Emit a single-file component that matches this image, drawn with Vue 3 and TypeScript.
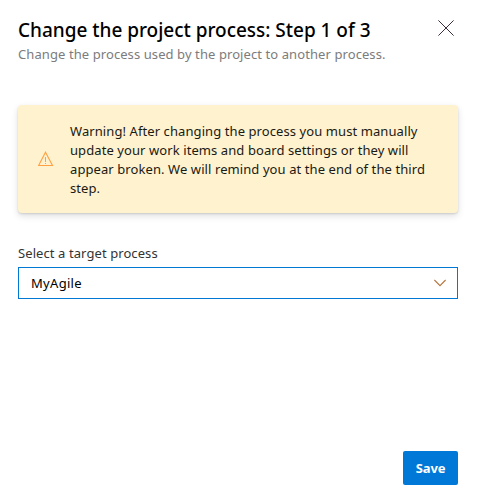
<script setup lang="ts">
import { ref } from 'vue'

const lines: string[] = [
  'Warning! After changing the process you must manually',
  'update your work items and board settings or they will',
  'appear broken. We will remind you at the end of the third',
  'step.',
]
const target = ref<string>('MyAgile')
</script>

<template>
  <section class="dialog">
    <header class="header">
      <div class="heading">
        <h1 class="title">Change the project process: Step 1 of 3</h1>
        <p class="subtitle">Change the process used by the project to another process.</p>
      </div>
      <button class="close" type="button">
        <svg width="16" height="16" viewBox="0 0 16 16" fill="none" stroke="#3c2c3c" stroke-width="1">
          <path d="M.4.4l15.2 15.2M15.6.4L.4 15.6" />
        </svg>
      </button>
    </header>

    <div class="warning">
      <svg class="warning-icon" width="16" height="16" viewBox="0 0 16 16" fill="none" stroke="#ffa043">
        <path d="M7.5 1.2L14.5 14.5H.6z" stroke-width="1.1" />
        <path d="M7.5 6v5M7.5 12v1" stroke-width="1" />
      </svg>
      <p class="warning-text">
        <span v-for="line in lines" :key="line" class="line">{{ line }}</span>
      </p>
    </div>

    <div class="field">
      <span class="label">Select a target process</span>
      <button class="dropdown" type="button">
        <span class="value">{{ target }}</span>
        <svg width="12" height="8" viewBox="0 0 12 8" fill="none" stroke="#b5763f" stroke-width="1.1">
          <path d="M.4 1L6 6.6 11.6 1" />
        </svg>
      </button>
    </div>

    <footer class="footer">
      <button class="save" type="button">Save</button>
    </footer>
  </section>
</template>

<style>
body {
  background: #fff;
}
</style>

<style scoped>
.dialog {
  box-sizing: border-box;
  width: 477px;
  height: 499px;
  padding: 16px 19px 14px 18px;
  display: flex;
  flex-direction: column;
  font-family: "Noto Sans", "Open Sans", sans-serif;
  font-size: 13px;
  letter-spacing: 0.085px;
  color: #1a1a14;
}
button {
  font: inherit;
  letter-spacing: inherit;
  margin: 0;
}
.header {
  display: flex;
  justify-content: space-between;
  height: 89px;
}
.title {
  margin: 0;
  font-size: 19px;
  line-height: 28px;
  font-weight: 500;
  letter-spacing: -0.02px;
  color: #000;
  white-space: nowrap;
}
.subtitle {
  margin: 0;
  line-height: 20px;
  color: #7c7c7c;
  white-space: nowrap;
}
.close {
  width: 16px;
  height: 16px;
  margin: 4px 4px 0 0;
  padding: 0;
  border: 0;
  background: none;
}
.close svg {
  display: block;
}
.warning {
  box-sizing: border-box;
  height: 108px;
  padding: 16px 20px;
  display: flex;
  align-items: flex-start;
  gap: 16px;
  border-radius: 4px;
  background: #fff2cf;
  box-shadow: 0 3px 7px rgba(0, 0, 0, 0.13), 0 1px 2px rgba(0, 0, 0, 0.12);
}
.warning-icon {
  flex: none;
  margin-top: 30px;
}
.warning-text {
  margin: 0;
  padding-top: 1px;
}
.line {
  display: block;
  line-height: 19px;
  white-space: nowrap;
}
.field {
  margin-top: 30px;
  display: flex;
  flex-direction: column;
}
.label {
  line-height: 20px;
  margin-bottom: 4px;
  color: #333;
}
.dropdown {
  box-sizing: border-box;
  height: 32px;
  padding: 0 11px 0 12px;
  display: flex;
  align-items: center;
  justify-content: space-between;
  border: 1px solid #0078d4;
  background: #fff;
  color: #000;
}
.value {
  letter-spacing: 0.3px;
}
.footer {
  margin-top: auto;
  display: flex;
  justify-content: flex-end;
}
.save {
  width: 55px;
  height: 34px;
  padding: 0;
  border: 0;
  border-radius: 2px;
  background: #0078d7;
  color: #fff;
  font-weight: 700;
  letter-spacing: -0.1px;
}
</style>
